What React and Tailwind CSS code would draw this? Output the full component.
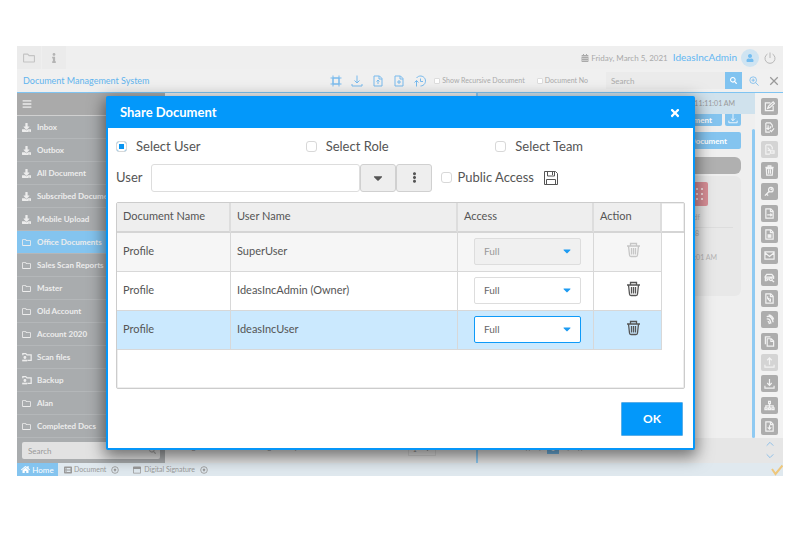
import {
  FaInfo, FaBars, FaDownload, FaRegFolder, FaHome, FaTimes, FaCaretDown, FaEllipsisV, FaUser, FaCalendarAlt,
  FaSearch, FaListAlt, FaRegWindowMaximize, FaAngleLeft, FaAngleRight, FaAngleDoubleLeft, FaAngleDoubleRight,
} from 'react-icons/fa';

function Glyph({ size = 12, stroke = 2, className = '', children }) {
  return (
    <svg width={size} height={size} viewBox="0 0 24 24" fill="none" stroke="currentColor" strokeWidth={stroke} className={className}>
      {children}
    </svg>
  );
}

const PAGE = 'M4 2h11l5 5v15H4zM14 2v6h6';

function SharedFolder() {
  return (
    <Glyph size={10} stroke={3} className="-mr-px shrink-0">
      <path d="M2 8V4h7l3 3h10v13h-9" />
      <circle cx="7" cy="13" r="2" fill="currentColor" />
      <path d="M2 21v-1h9v1z" fill="currentColor" />
    </Glyph>
  );
}

function CloseDot() {
  return (
    <Glyph size={8} stroke={2.5}>
      <circle cx="12" cy="12" r="10" />
      <path d="M9 9l6 6M15 9l-6 6" strokeWidth="4" />
    </Glyph>
  );
}

const folders = [
  { name: 'Inbox', icon: FaDownload },
  { name: 'Outbox', icon: FaDownload },
  { name: 'All Document', icon: FaDownload },
  { name: 'Subscribed Document', icon: FaDownload },
  { name: 'Mobile Upload', icon: FaDownload },
  { name: 'Office Documents', icon: FaRegFolder, active: true },
  { name: 'Sales Scan Reports', icon: FaRegFolder },
  { name: 'Master', icon: FaRegFolder },
  { name: 'Old Account', icon: FaRegFolder },
  { name: 'Account 2020', icon: FaRegFolder },
  { name: 'Scan files', icon: SharedFolder },
  { name: 'Backup', icon: SharedFolder },
  { name: 'Alan', icon: FaRegFolder },
  { name: 'Completed Docs', icon: FaRegFolder },
];

const toolbar = [
  { label: 'Select area', art: <path d="M6 6h12v12H6zM6 1v22M18 1v22M1 6h22M1 18h22" strokeDasharray="none" /> },
  { label: 'Download', art: <path d="M12 1v15M7 11l5 5 5-5M2 18v4h20v-4" /> },
  { label: 'Upload file', art: <path d={`${PAGE}M12 18v-8M9 13l3-3 3 3`} /> },
  { label: 'Add file', art: <path d={`${PAGE}M12 10v8M8 14h8`} /> },
  { label: 'History', art: <path d="M5 6a10 10 0 1 1 8 16M13 7v6h5M5 23V11M1 15l4-4 4 4" /> },
];

const actions = [
  { label: 'Edit', art: <path d="M14 4H3v17h17V11M8 16l2-5 10-9 3 3-10 9z" /> },
  { label: 'Check in', art: <path d="M4 2h10l4 5v5M4 2v20h9M9 7v9M6 13l3 3 3-3M14 9v5M13 18l3 3 6-7" /> },
  { label: 'Check out', faded: true, art: <path d="M4 2h10l4 5v5M4 2v20h9M8 8l6 6M8 14h6M14 20h8v-5h-8z" /> },
  { label: 'Delete', art: <path d="M3 5h18M9 5V2h6v3M5 8l1 14h12l1-14zM10 10v9M14 10v9" /> },
  { label: 'Permissions', art: <><circle cx="15" cy="8" r="5" /><circle cx="16" cy="7" r="1" /><path d="M11 12l-9 9M5 17l4 4" strokeWidth="3" /></> },
  { label: 'Move', art: <path d={`${PAGE}M7 15h10M14 12l3 3-3 3`} /> },
  { label: 'Lock', art: <><path d={PAGE} /><path d="M9 13h6v5H9z" fill="currentColor" /></> },
  { label: 'Mail', art: <path d="M2 4h20v16H2zM2 6l10 8 10-8" /> },
  { label: 'Preview', art: <path d="M3 16V9l3-4h11l4 5v5M1 11h20M6 19H3v-4h8M8 15v4M12 16a3 3 0 1 0 6 0a3 3 0 1 0-6 0M17 18l5 4" /> },
  { label: 'Link', art: <path d={`${PAGE}M8 7v5h4M8 12l6 7M14 12v7`} /> },
  { label: 'Fingerprint', art: <path d="M6 6c7-4 13 4 14 12M6 11c6-2 8 4 9 10M8 16c3 0 3 3 4 6M10 2c6 1 10 6 11 10" strokeWidth="3" /> },
  { label: 'Copy', art: <path d="M7 6h9l5 5v11H7zM15 6v6h6M3 18V2h11" /> },
  { label: 'Upload', faded: true, art: <path d="M12 17V2M7 7l5-5 5 5M2 17v5h20v-5" /> },
  { label: 'Download', art: <path d="M12 2v14M7 11l5 5 5-5M2 17v5h20v-5" /> },
  { label: 'Workflow', art: <path d="M10 3h4v5h-4zM12 8v5M4 17v-4h16v4M12 13v4M2 17h5v4H2zM10 17h4v4h-4zM17 17h5v4h-5z" /> },
  { label: 'Export', art: <path d={`${PAGE}M12 9v9M8 14l4 4 4-4`} /> },
];

const shares = [
  { user: 'SuperUser', disabled: true, row: 'bg-[#f6f6f6]', select: 'border-[#dddddd] bg-[#f0f0f0] text-[#999999]' },
  { user: 'IdeasIncAdmin (Owner)', row: 'bg-white', select: 'border-[#dddddd] bg-white text-[#666666]' },
  { user: 'IdeasIncUser', row: 'bg-[#cbe9fe]', select: 'border-[#0e9af8] bg-white text-[#666666]' },
];

const check = 'appearance-none shrink-0 border bg-white';

function Header() {
  return (
    <header className="text-[#aaaaaa]">
      <div className="flex h-[23px] items-center bg-[#efefef]">
        <button aria-label="Folders" className="flex h-full w-6 items-center justify-center bg-[#ebebeb] text-[#c4c4c4]"><FaRegFolder size={12} /></button>
        <button aria-label="Info" className="ml-px flex h-full w-6 items-center justify-center bg-[#ebebeb] text-[#b4b4b4]"><FaInfo size={10} /></button>
        <div className="ml-auto flex items-center pr-[7px]">
          <FaCalendarAlt size={8} />
          <span className="mx-0.5 text-[8px]">Friday, March 5, 2021</span>
          <a href="#profile" className="ml-[3px] text-[10px] text-[#62b6f2]">IdeasIncAdmin</a>
          <span className="ml-1 flex size-[18px] items-center justify-center rounded-full bg-[#cfe4f2] text-[#74bdf0]"><FaUser size={8} /></span>
          <button aria-label="Log out" className="ml-[5px]"><Glyph size={12} stroke={1.6}><path d="M12 1v11M7 4a10 10 0 1 0 10 0" /></Glyph></button>
        </div>
      </div>
      <div className="flex h-6 items-center border-b border-b-[#7fc4f2] bg-[#f0f0f0] pl-1.5 pr-1">
        <h1 className="text-[9px] text-[#62b4ee]">Document Management System</h1>
        <div className="ml-auto flex gap-[9px] text-[#78baed]">
          {toolbar.map((t) => (
            <button key={t.label} aria-label={t.label}><Glyph>{t.art}</Glyph></button>
          ))}
        </div>
        <label className="ml-2 flex items-center gap-0.5 text-[7px]">
          <input type="checkbox" className={`${check} size-[6px] rounded-[1px] border-[#dddddd]`} /> Show Recursive Document
        </label>
        <label className="ml-3 flex items-center gap-0.5 text-[7px]">
          <input type="checkbox" className={`${check} size-[6px] rounded-[1px] border-[#dddddd]`} /> Document No
        </label>
        <div className="ml-[18px] flex">
          <input aria-label="Search documents" placeholder="Search" className="h-[17px] w-[119px] bg-[#ebebeb] px-[5px] text-[8px] placeholder:text-[#aaaaaa]" />
          <button aria-label="Search" className="flex h-[17px] w-[17px] items-center justify-center bg-[#80c3f0] text-white"><FaSearch size={7} /></button>
        </div>
        <button aria-label="Zoom in" className="ml-[7px] text-[#78baed]"><Glyph size={10}><circle cx="10" cy="10" r="8" /><path d="M16 16l7 7M10 6v8M6 10h8" /></Glyph></button>
        <button aria-label="Close" className="ml-2.5 text-[#999999]"><Glyph size={10} stroke={3}><path d="M3 3l18 18M21 3L3 21" /></Glyph></button>
      </div>
    </header>
  );
}

function Sidebar() {
  return (
    <nav className="flex w-[148px] shrink-0 flex-col bg-[#a9acae] text-[#ededed]">
      <button aria-label="Menu" className="flex h-[23px] items-center border-b border-[#d0d0d0] bg-[#aaaaaa] pl-[5px]"><FaBars size={10} /></button>
      {folders.map((f) => (
        <a
          key={f.name}
          href="#folder"
          className={`flex h-[23px] items-center gap-1.5 overflow-hidden border-b border-[#b4b7b9] pl-[5px] text-[8px] font-bold whitespace-nowrap ${f.active ? 'bg-[#84c4ef]' : ''}`}
        >
          <f.icon size={9} className="shrink-0" />
          {f.name}
        </a>
      ))}
      <div className="flex flex-1 items-center px-[5px]">
        <div className="flex h-[17px] flex-1 items-center rounded-xs bg-[#e2e2e2] pr-1 text-[#aaaaaa]">
          <input aria-label="Search folders" placeholder="Search" className="min-w-0 flex-1 px-1.5 text-[8px] placeholder:text-[#999999]" />
          <FaSearch size={7} />
        </div>
      </div>
    </nav>
  );
}

function Results() {
  return (
    <section className="flex min-w-0 flex-1 flex-col border-r-2 border-[#8fcaf2] bg-[#efefef]">
      <div className="flex-1" />
      <div className="flex h-[25px] items-start gap-2 bg-[#e6e6e6] pt-1 pr-2 pl-1 text-[7px] whitespace-nowrap text-[#888888]">
        <span className="flex-1">Showing results 1-23 of 23 Navigate or update record</span>
        <FaAngleDoubleLeft size={8} /><FaAngleLeft size={8} />
        <span className="flex h-[14px] w-7 items-center justify-around border border-[#d5d5d5]">1 <FaCaretDown size={7} /></span>
        <FaAngleRight size={8} /><FaAngleDoubleRight size={8} />
      </div>
    </section>
  );
}

function Preview() {
  return (
    <section className="flex w-[305px] shrink-0 flex-col bg-[#efefef] text-[7px] text-[#a5a5a5]">
      <div className="flex flex-1">
        <div className="flex flex-1 flex-col">
          <div className="flex h-[21px] items-center justify-end bg-[#d0e2ed] pr-5 text-[#999999]">11:11:01 AM</div>
          <div className="flex flex-1">
            <div className="flex flex-1 flex-col pr-[11px] pl-2 text-[8px] font-bold text-white">
              <div className="flex gap-[3px]">
                <button className="h-3 flex-1 rounded-b-xs bg-[#84c4ef] pr-2.5 text-right leading-none">Document</button>
                <button aria-label="Download" className="flex h-3 w-4 justify-center rounded-b-xs bg-[#84c4ef]"><Glyph size={10}><path d="M12 0v16M7 11l5 5 5-5M2 16v5h20v-5" /></Glyph></button>
              </div>
              <button className="mt-[6px] h-[17px] rounded-xs bg-[#84c4ef] pr-3.5 text-right">View Document</button>
              <div className="mt-2 h-[17px] rounded-md bg-[#b0b0b0]" />
              <div className="mt-0.5 flex h-[120px] flex-col items-end rounded-md bg-[#e8e8e8] text-[7px] font-normal text-[#b4b4b4]">
                <div className="mt-[6px] mr-[33px] grid h-6 w-[22px] grid-cols-3 place-items-center rounded-xs bg-[#d88f97] p-1">
                  {[0, 1, 2, 3, 4, 5, 6, 7, 8].map((n) => <span key={n} className="size-0.5 bg-[#f3dadc]" />)}
                </div>
                <p className="mt-1.5 pr-[41px]">Profile.pdf</p>
                <div className="mt-1 mr-2 w-5/6 border-t border-[#dddddd]" />
                <p className="pr-[42px]">08</p>
                <p className="mt-3.5 pr-[24px]">11:11:01 AM</p>
              </div>
            </div>
            <div className="w-[3px] pt-[15px]"><div className="h-full rounded bg-[#8fcaf2]" /></div>
          </div>
        </div>
        <div className="flex w-[28px] flex-col items-center justify-between bg-[#f2f2f2] pt-[5px] pb-[3px]">
          {actions.map((a) => (
            <button
              key={a.label}
              aria-label={a.label}
              className={`flex size-[17px] items-center justify-center rounded-xs text-[#f2f2f2] ${a.faded ? 'bg-[#d4d4d4]' : 'bg-[#adadad]'}`}
            >
              <Glyph size={11} stroke={2.6}>{a.art}</Glyph>
            </button>
          ))}
        </div>
      </div>
      <div className="flex h-[25px] items-start bg-[#e6e6e6] pl-2 text-[#888888]">
        <span className="mt-1">Revisions</span>
        <span className="mt-1.5 ml-2 flex gap-1"><FaAngleDoubleLeft size={8} /><FaAngleLeft size={8} /></span>
        <span className="mt-1 ml-1 flex h-3 w-3 items-center justify-center bg-[#70b5e5] text-white">1</span>
        <span className="mt-1.5 ml-1.5 flex gap-1"><FaAngleRight size={8} /><FaAngleDoubleRight size={8} /></span>
        <div className="mt-0.5 mr-[9px] ml-auto flex flex-col gap-1 text-[#91c0e8]">
          <button aria-label="Scroll up"><Glyph size={8} stroke={3}><path d="M2 17l10-10 10 10" /></Glyph></button>
          <button aria-label="Scroll down"><Glyph size={8} stroke={3}><path d="M2 7l10 10 10-10" /></Glyph></button>
        </div>
      </div>
    </section>
  );
}

function TaskBar() {
  return (
    <footer className="flex h-[13px] items-center bg-[#e0e9ef] text-[7px] text-[#999999]">
      <a href="#home" className="flex h-full w-[41px] items-center justify-center gap-0.5 bg-[#84c4ef] text-[8px] text-white"><FaHome size={9} /> Home</a>
      <a href="#document" className="ml-1.5 flex items-center gap-0.5"><FaListAlt size={8} /> Document</a>
      <button aria-label="Close Document" className="ml-[5px]"><CloseDot /></button>
      <a href="#signature" className="ml-[14px] flex items-center gap-[3px]"><FaRegWindowMaximize size={8} /> Digital Signature</a>
      <button aria-label="Close Digital Signature" className="ml-[5px]"><CloseDot /></button>
      <span className="ml-auto text-[#eec77c]"><Glyph size={12} stroke={4}><path d="M2 10l7 10L23 3" /></Glyph></span>
    </footer>
  );
}

function TrashIcon() {
  return (
    <svg width="15" height="16" viewBox="0 0 15 16" fill="none" stroke="currentColor" strokeWidth="1.3">
      <path d="M1 4h13M4.500 4V1.500h6V4M2.500 4l1 9q0 1.500 1.500 1.500h5q1.500 0 1.500-1.500l1-9M5.500 6v6.500M7.500 6v6.500M9.500 6v6.500" />
    </svg>
  );
}

function ShareTable() {
  const cell = 'border-r border-r-[#d8d8d8] border-b border-b-[#d8d8d8] px-1.5 text-left';
  const head = 'border-r-2 border-r-[#dddddd] border-b-2 border-b-[#d5d5d5] bg-[#eeeeee] px-1.5 text-left font-normal';
  return (
    <div className="h-[187px] rounded-xs border border-[#cccccc] shadow-[inset_0_0_0_1px_#eeeeee]">
      <table className="w-full table-fixed border-separate border-spacing-0 text-[11px]">
        <colgroup>
          <col className="w-[114px]" />
          <col />
          <col className="w-[136px]" />
          <col className="w-[68px]" />
          <col className="w-[22px]" />
        </colgroup>
        <thead>
          <tr className="h-[30px]">
            <th className={head}>Document Name</th>
            <th className={head}>User Name</th>
            <th className={head}>Access</th>
            <th className={head}>Action</th>
            <td className="border-b-2 border-b-[#d5d5d5]" />
          </tr>
        </thead>
        <tbody>
          {shares.map((s) => (
            <tr key={s.user} className={`h-[39px] ${s.row}`}>
              <td className={cell}>Profile</td>
              <td className={cell}>{s.user}</td>
              <td className="border-r border-r-[#d8d8d8] border-b border-b-[#d8d8d8] pr-3 pl-4">
                <div className="relative">
                  <select aria-label={`Access for ${s.user}`} disabled={s.disabled} className={`block h-[27px] w-full appearance-none rounded-xs border px-[9px] text-[10px] opacity-100 ${s.select}`}>
                    <option>Full</option>
                  </select>
                  <FaCaretDown size={12} className="pointer-events-none absolute top-[7px] right-2 text-[#1d9bf2]" />
                </div>
              </td>
              <td className="border-r border-r-[#d8d8d8] border-b border-b-[#d8d8d8] pb-1 pl-[11px] text-center">
                <button aria-label={`Remove ${s.user}`} disabled={s.disabled} className={`align-middle ${s.disabled ? 'text-[#c6c6c6]' : 'text-[#555555]'}`}>
                  <TrashIcon />
                </button>
              </td>
              <td className="bg-white" />
            </tr>
          ))}
        </tbody>
      </table>
    </div>
  );
}

function ShareDialog() {
  const squareButton = 'flex h-7 w-9 items-center justify-center rounded-[3px] border border-[#d0d0d0] bg-[#eeeeee]';
  return (
    <div role="dialog" aria-labelledby="share-title" className="absolute top-[50px] right-[88px] left-[89px] rounded-xs border-2 border-[#0696f8] bg-white text-[#555555] shadow-[0_5px_16px_2px_rgba(0,0,0,0.5)]">
      <div className="flex h-[30px] items-center justify-between bg-[#0398fa] pr-3 pl-3 text-white">
        <h2 id="share-title" className="text-[13px] font-bold">Share Document</h2>
        <button aria-label="Close dialog"><FaTimes size={12} /></button>
      </div>
      <div className="px-2">
        <div className="grid grid-cols-3 pt-[9px] text-[13px]">
          {['User', 'Role', 'Team'].map((kind) => (
            <label key={kind} className="flex items-center gap-[9px]">
              <input
                type="radio"
                name="target"
                defaultChecked={kind === 'User'}
                className={`${check} size-[11px] rounded-[3px] border-[#d8d8d8] checked:bg-[#0a96f2] checked:shadow-[inset_0_0_0_2px_#ffffff]`}
              />
              Select {kind}
            </label>
          ))}
        </div>
        <div className="mt-[7px] flex items-center text-[13px]">
          <label htmlFor="share-user">User</label>
          <input id="share-user" className="ml-[9px] h-7 w-[209px] rounded-[3px] border border-[#dddddd] px-2" />
          <button aria-label="Show users" className={squareButton}><FaCaretDown size={14} /></button>
          <button aria-label="More options" className={squareButton}><FaEllipsisV size={11} /></button>
          <label className="ml-[9px] flex items-center gap-[5px]">
            <input type="checkbox" className={`${check} size-[11px] rounded-[3px] border-[#d8d8d8] checked:bg-[#0a96f2]`} />
            Public Access
          </label>
          <button aria-label="Save" className="ml-[9px]">
            <svg width="16" height="16" viewBox="0 0 16 16" fill="none" stroke="currentColor">
              <path d="M1.5 1.5h11l2 2v11h-13zM4.5 2v4h7V2M9.5 2v3M3.500 14V9.500h9V14" />
            </svg>
          </button>
        </div>
        <div className="mt-2.5"><ShareTable /></div>
        <div className="flex justify-end pt-[13px] pr-0.5 pb-3">
          <button className="h-[34px] w-[62px] rounded-[1px] border border-[#5aaee8] bg-[#0398fa] text-[12px] font-bold text-white">OK</button>
        </div>
      </div>
    </div>
  );
}

export default function App() {
  return (
    <main className="min-h-screen bg-white px-[17px] pt-[46px] font-['Lato',sans-serif]">
      <div className="relative">
        <Header />
        <div className="flex h-[370px]">
          <Sidebar />
          <Results />
          <Preview />
        </div>
        <TaskBar />
        <ShareDialog />
      </div>
    </main>
  );
}
